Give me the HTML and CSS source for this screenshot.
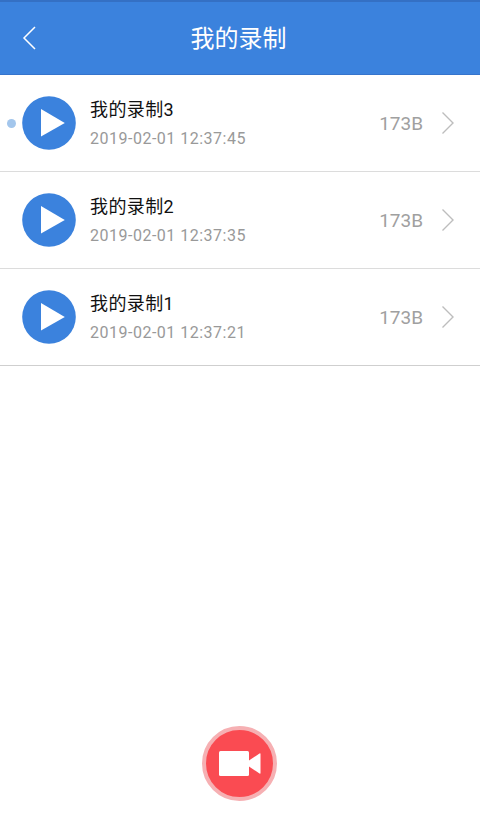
FILE: index.html
```html
<!DOCTYPE html>
<html lang="zh-CN">
<head>
  <meta charset="UTF-8" />
  <meta name="viewport" content="width=device-width, initial-scale=1.0" />
  <title>我的录制</title>
  <link rel="stylesheet" href="styles.css">
</head>
<body>
  <div class="page">
    <div class="header">
      <svg class="back" viewBox="0 0 14 24" width="14" height="24">
        <path d="M13 1 L2 12 L13 23" fill="none" stroke="#fff" stroke-width="1.5" />
      </svg>
      <h1>我的录制</h1>
    </div>

    <div class="list">
      <div class="row">
        <span class="dot"></span>
        <svg class="play" viewBox="0 0 54 54" width="54" height="54">
          <circle cx="27" cy="27" r="26.8" fill="#3b82dd" />
          <path d="M19 13 L42.8 27 L19 40.5 Z" fill="#fff" />
        </svg>
        <div class="info">
          <div class="name">我的录制3</div>
          <div class="time">2019-02-01 12:37:45</div>
        </div>
        <div class="size">173B</div>
        <svg class="arrow" viewBox="0 0 14 24" width="14" height="24">
          <path d="M1.5 1.5 L12 12 L1.5 22.5" fill="none" stroke="#bdbdbd" stroke-width="1.4" />
        </svg>
      </div>
      <div class="row">
        <svg class="play" viewBox="0 0 54 54" width="54" height="54">
          <circle cx="27" cy="27" r="26.8" fill="#3b82dd" />
          <path d="M19 13 L42.8 27 L19 40.5 Z" fill="#fff" />
        </svg>
        <div class="info">
          <div class="name">我的录制2</div>
          <div class="time">2019-02-01 12:37:35</div>
        </div>
        <div class="size">173B</div>
        <svg class="arrow" viewBox="0 0 14 24" width="14" height="24">
          <path d="M1.5 1.5 L12 12 L1.5 22.5" fill="none" stroke="#bdbdbd" stroke-width="1.4" />
        </svg>
      </div>
      <div class="row last">
        <svg class="play" viewBox="0 0 54 54" width="54" height="54">
          <circle cx="27" cy="27" r="26.8" fill="#3b82dd" />
          <path d="M19 13 L42.8 27 L19 40.5 Z" fill="#fff" />
        </svg>
        <div class="info">
          <div class="name">我的录制1</div>
          <div class="time">2019-02-01 12:37:21</div>
        </div>
        <div class="size">173B</div>
        <svg class="arrow" viewBox="0 0 14 24" width="14" height="24">
          <path d="M1.5 1.5 L12 12 L1.5 22.5" fill="none" stroke="#bdbdbd" stroke-width="1.4" />
        </svg>
      </div>
    </div>

    <div class="footer">
      <div class="record">
        <svg viewBox="0 0 42 25" width="42" height="25">
          <rect x="0" y="0" width="30" height="25" rx="1.5" fill="#fff" />
          <path d="M30 9.5 L40.5 2.5 Q41.5 2 41.5 3 L41.5 22 Q41.5 23 40.5 22.5 L30 15.5 Z" fill="#fff" />
        </svg>
      </div>
    </div>
  </div>
</body>
</html>
```

FILE: styles.css
```css
html, body {
  margin: 0;
  padding: 0;
}
body {
  background-color: #fff;
  font-family: Roboto, "Noto Sans CJK SC", sans-serif;
}
.page {
  width: 480px;
  height: 821px;
  display: flex;
  flex-direction: column;
  overflow: hidden;
}
.header {
  height: 75px;
  box-sizing: border-box;
  border-top: 2px solid #3470c4;
  border-bottom: 1px solid #3574cc;
  padding-bottom: 4px;
  padding-right: 3px;
  background-color: #3b82dd;
  position: relative;
  display: flex;
  align-items: center;
  justify-content: center;
}
.header h1 {
  margin: 0;
  font-size: 24px;
  font-weight: 400;
  color: #fff;
}
.back {
  position: absolute;
  left: 22px;
  top: 24px;
}
.list {
  flex: 1;
}
.row {
  height: 97px;
  box-sizing: border-box;
  border-bottom: 1px solid #dcdcdc;
  padding-left: 22px;
  padding-right: 25px;
  display: flex;
  align-items: center;
  position: relative;
}
.row.last {
  border-bottom-color: #cfcfcf;
}
.dot {
  position: absolute;
  left: 7px;
  top: 44px;
  width: 9px;
  height: 9px;
  border-radius: 50%;
  background-color: #a3c6ec;
}
.info {
  flex: 1;
  margin-left: 14px;
}
.name {
  font-size: 18px;
  line-height: 24px;
  letter-spacing: 0.4px;
  color: #111;
}
.time {
  font-size: 16px;
  line-height: 20px;
  margin-top: 7px;
  color: #999;
  letter-spacing: 0.5px;
}
.size {
  font-size: 19px;
  color: #a0a0a0;
  margin-right: 18px;
}
.footer {
  display: flex;
  justify-content: center;
  padding-right: 1px;
  padding-bottom: 20px;
}
.record {
  width: 67px;
  height: 67px;
  border: 4px solid #f6b0b3;
  border-radius: 50%;
  background-color: #fa4b52;
  display: flex;
  align-items: center;
  justify-content: center;
}
```
